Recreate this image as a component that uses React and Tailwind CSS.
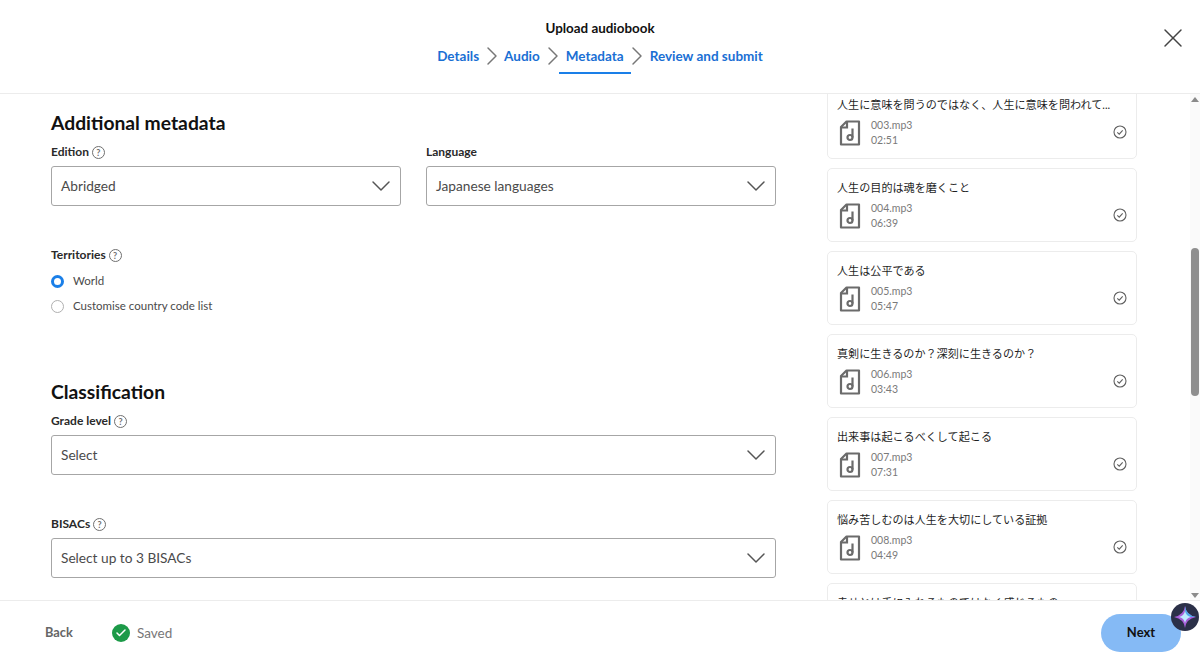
import { ChevronDown, ChevronRight, X, Check } from 'lucide-react'

const tracks = [
  { title: '人生の目的は魂を磨くこと', file: '004.mp3', time: '06:39' },
  { title: '人生は公平である', file: '005.mp3', time: '05:47' },
  { title: '真剣に生きるのか？深刻に生きるのか？', file: '006.mp3', time: '03:43' },
  { title: '出来事は起こるべくして起こる', file: '007.mp3', time: '07:31' },
  { title: '悩み苦しむのは人生を大切にしている証拠', file: '008.mp3', time: '04:49' },
]

function Help() {
  return (
    <span className="flex h-[13px] w-[13px] items-center justify-center rounded-full border border-[#6f6f6f] text-[9px] leading-none text-[#6f6f6f]">?</span>
  )
}

function FileIcon() {
  return (
    <svg width="22" height="26" viewBox="0 0 22 26" fill="none" stroke="#6b6b6b" strokeWidth="2.2" className="shrink-0">
      <path d="M7.500 1.500h12.500v23H2V7z" strokeLinejoin="round" />
      <path d="M8 2v5.500H2.500" />
      <path d="M13.500 8.500v9" />
      <circle cx="11" cy="17.500" r="2.500" />
    </svg>
  )
}

function CheckCircle() {
  return (
    <svg width="14" height="14" viewBox="0 0 14 14" fill="none" stroke="#5f5f5f" strokeWidth="1.100" className="shrink-0">
      <circle cx="7" cy="7" r="6" />
      <path d="M4.300 7.300l1.900 1.800 3.500-3.800" />
    </svg>
  )
}

function Track({ title, file, time, className = '' }) {
  return (
    <div className={`h-[74px] shrink-0 rounded-[5px] border border-[#ececec] bg-white px-[9px] pt-[11px] ${className}`}>
      <p className="text-[11.100px] leading-[16px] whitespace-nowrap text-[#1f1f1f]">{title}</p>
      {/* last card is cut off by the footer, it only shows its title */}
      {file && (
        <div className="mt-[5px] flex items-center">
          <span className="ml-[2px]"><FileIcon /></span>
          <div className="ml-[10px] flex-1 text-[10.500px] leading-[15px] text-[#7a7a7a]">
            <p>{file}</p>
            <p>{time}</p>
          </div>
          <span className="-mt-[3px]"><CheckCircle /></span>
        </div>
      )}
    </div>
  )
}

function Select({ value, className }) {
  return (
    <div className={`flex h-[40px] items-center justify-between rounded-[3px] border border-[#a6a6a6] bg-white pr-[3px] pl-[9px] ${className}`}>
      <span className="text-[13.700px] text-[#4a4a4a]">{value}</span>
      <ChevronDown size={32} strokeWidth={1.100} className="text-[#555]" />
    </div>
  )
}

function Label({ children, help }) {
  return (
    <div className="flex h-[16px] items-center gap-[3px] text-[12px] font-bold text-[#2a2a2a]">
      {children}
      {help && <Help />}
    </div>
  )
}

export default function App() {
  return (
    <div className="relative flex h-[665px] w-[1200px] flex-col overflow-hidden bg-white font-['Lato','Noto_Sans_CJK_JP',sans-serif]">
      <header className="relative h-[94px] shrink-0 border-b border-[#ececec] pt-[20px] text-center">
        <h1 className="text-[13.400px] leading-[16px] font-bold text-[#111]">Upload audiobook</h1>
        <nav className="mt-[12px] flex h-[26px] items-start justify-center text-[13.500px] leading-[16px] font-bold text-[#1a6fd4]">
          <span>Details</span>
          <ChevronRight size={32} strokeWidth={1.100} className="-mt-[8px] -mr-[4px] -ml-[3px] text-[#777]" />
          <span>Audio</span>
          <ChevronRight size={32} strokeWidth={1.100} className="-mt-[8px] -mr-[10px] -ml-[3px] text-[#777]" />
          <span className="h-[26px] border-b-2 border-[#1a7fe8] px-[7px]">Metadata</span>
          <ChevronRight size={32} strokeWidth={1.100} className="-mt-[8px] -mr-[3px] -ml-[10px] text-[#777]" />
          <span>Review and submit</span>
        </nav>
        <X size={32} strokeWidth={1.100} className="absolute top-[22px] right-[11px] text-[#444]" />
      </header>

      <main className="flex min-h-0 flex-1">
        <section className="w-[827px] shrink-0 overflow-hidden pt-[17px] pl-[51px]">
          <h2 className="text-[19.300px] leading-[24px] font-bold text-[#111]">Additional metadata</h2>
          <div className="mt-[9px] flex gap-[25px]">
            <div className="w-[350px]">
              <Label help>Edition</Label>
              <Select value="Abridged" className="mt-[6px]" />
            </div>
            <div className="w-[350px]">
              <Label>Language</Label>
              <Select value="Japanese languages" className="mt-[6px]" />
            </div>
          </div>
          <div className="mt-[41px]">
            <Label help>Territories</Label>
          </div>
          <div className="mt-[10px] flex h-[16px] items-center gap-[9px] text-[11.500px] text-[#4a4a4a]">
            <span className="h-[13px] w-[13px] rounded-full border-[3.500px] border-[#1a7fe8] bg-white" />
            World
          </div>
          <div className="mt-[9px] flex h-[16px] items-center gap-[9px] text-[11.500px] text-[#4a4a4a]">
            <span className="h-[13px] w-[13px] rounded-full border border-[#b0b0b0] bg-white" />
            Customise country code list
          </div>
          <h2 className="mt-[66px] text-[19.300px] leading-[24px] font-bold text-[#111]">Classification</h2>
          <div className="mt-[9px]"><Label help>Grade level</Label></div>
          <Select value="Select" className="mt-[6px] w-[725px]" />
          <div className="mt-[41px]"><Label help>BISACs</Label></div>
          <Select value="Select up to 3 BISACs" className="mt-[6px] w-[725px]" />
        </section>

        <section className="flex w-[310px] shrink-0 flex-col gap-[9px] overflow-hidden">
          <Track className="-mt-[9px]" title="人生に意味を問うのではなく、人生に意味を問われて..." file="003.mp3" time="02:51" />
          {tracks.map(t => <Track key={t.file} {...t} />)}
          <Track title="幸せとは手に入れるものではなく感じるもの" />
        </section>

        <div className="ml-auto flex w-[10px] flex-col items-center bg-[#fafafa]">
          <span className="mt-[3px] h-0 w-0 border-x-[4px] border-b-[5px] border-x-transparent border-b-[#8a8a8a]" />
          <span className="mt-[146px] h-[148px] w-[8px] rounded-[4px] bg-[#8f8f8f]" />
          <span className="mt-auto mb-[2px] h-0 w-0 border-x-[4px] border-t-[5px] border-x-transparent border-t-[#8a8a8a]" />
        </div>
      </main>

      <footer className="flex h-[65px] shrink-0 items-center border-t border-[#ececec] bg-white pl-[45px]">
        <span className="w-[29px] text-[12.800px] font-bold text-[#666]">Back</span>
        <span className="ml-[38px] flex h-[18px] w-[18px] items-center justify-center rounded-full bg-[#1c9a48]">
          <Check size={12} strokeWidth={3} className="text-white" />
        </span>
        <span className="ml-[7px] text-[13.500px] text-[#777]">Saved</span>
      </footer>

      <button className="absolute top-[614px] left-[1101px] h-[38px] w-[80px] rounded-full bg-[#85baf5] pb-[1px] text-[13px] font-bold text-[#111]">Next</button>
      <div className="absolute top-[603px] left-[1171px] flex h-[28px] w-[28px] items-center justify-center rounded-full bg-[#2b3048]">
        <svg width="26" height="26" viewBox="0 0 26 26">
          <path d="M13 2 Q14 11 24 13 Q14 15 13 24 Q12 15 2 13 Q12 11 13 2z" fill="#a85fd8" />
          <path d="M13 2 Q14 11 24 13 L13 13z" fill="#4fa8e8" />
          <path d="M13 7 Q14 12 19 13 Q14 14 13 19 Q12 14 7 13 Q12 12 13 7z" fill="#bfeaff" />
        </svg>
      </div>
    </div>
  )
}
